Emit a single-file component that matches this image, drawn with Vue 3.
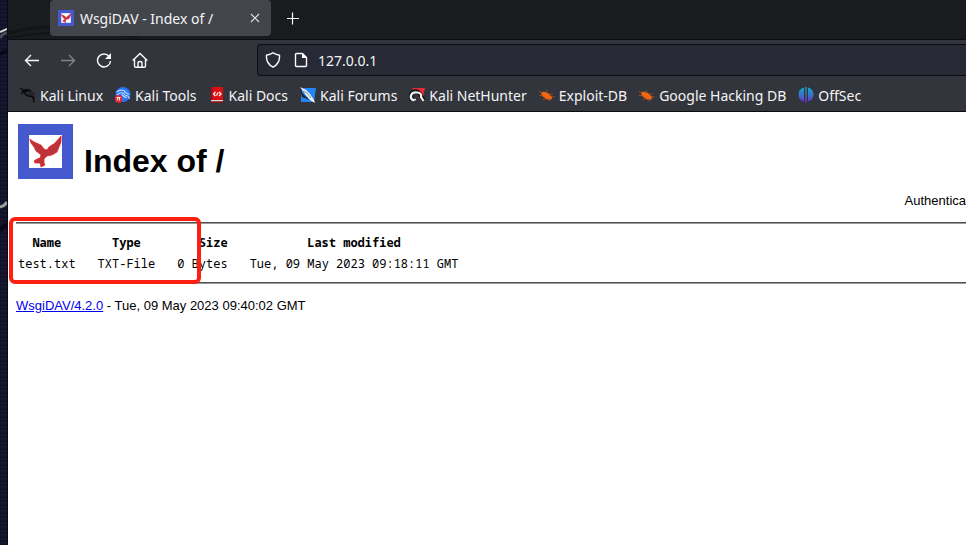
<script setup>
const bookmarks = [
  { name: 'Kali Linux', icon: 'dragon' },
  { name: 'Kali Tools', icon: 'tools' },
  { name: 'Kali Docs', icon: 'docs' },
  { name: 'Kali Forums', icon: 'forums' },
  { name: 'Kali NetHunter', icon: 'nethunter' },
  { name: 'Exploit-DB', icon: 'bug' },
  { name: 'Google Hacking DB', icon: 'bug' },
  { name: 'OffSec', icon: 'offsec' }
]
const files = [
  { name: 'test.txt', type: 'TXT-File', size: '0 Bytes', modified: 'Tue, 09 May 2023 09:18:11 GMT' }
]
const dove = 'M.7 4 L5 7 L12 10 L15 14 L18 15 L20 12 L26 8 L32 1 Q33 7 30 12 L28 17 L23 20 L18 21 L15 24 L15 28 L16 30 L12 32 L11 28 L6 28 L5 26 L8 24 L11 23 L12 20 L7 16 L5 12 L2 8Z'
</script>

<template>
  <div class="screen">
    <div class="desktop" aria-hidden="true">
      <svg width="7" height="240" viewBox="0 0 7 240">
        <path d="M0 32 L7 29" stroke="#d8d8d4" stroke-width="2" />
        <path d="M0 38 Q3 33 7 33" stroke="#454b50" stroke-width="3" fill="none" />
        <path d="M0 54 L7 51" stroke="#05051a" stroke-width="3" />
        <path d="M0 207 Q5 206 7 202" stroke="#93a297" stroke-width="3" fill="none" />
        <path d="M0 230 L7 224" stroke="#080816" stroke-width="4" />
      </svg>
    </div>
    <div class="browser">
      <header class="chrome">
        <div class="tabs">
          <svg class="arcs" width="150" height="14" viewBox="0 0 150 14" fill="none" aria-hidden="true">
            <path d="M0 8 Q25 1 55 2" stroke="#131417" stroke-width="3" />
            <path d="M0 13 Q65 1 130 13" stroke="#141519" stroke-width="2" />
          </svg>
          <div class="tab">
            <svg width="16" height="16" viewBox="0 0 55 55" aria-hidden="true">
              <path fill="#4559cf" d="M0 0h55v55H0z" /><path fill="#fff" d="M11 11h33v33H11z" />
              <path :d="dove" transform="translate(11 11)" fill="#c92c38" stroke="#c92c38" stroke-width="2" />
            </svg>
            <span class="tab-title">WsgiDAV - Index of /</span>
            <button class="icon-btn close" aria-label="Close tab">
              <svg width="16" height="16" viewBox="0 0 16 16"><path d="M4 4l8 8M12 4l-8 8" stroke="#e2e2e6" stroke-width="1.1" /></svg>
            </button>
          </div>
          <button class="icon-btn" aria-label="New tab">
            <svg width="16" height="16" viewBox="0 0 16 16"><path d="M2 8.5h12M7.500 2.500v12" stroke="#fbfbfe" stroke-width="1.2" /></svg>
          </button>
        </div>
        <div class="toolbar">
          <nav class="nav-buttons">
            <button class="icon-btn" aria-label="Back">
              <svg width="16" height="16" viewBox="0 0 16 16"><path d="M15 8.500H1.500M7 3L1.500 8.500L7 14" /></svg>
            </button>
            <button class="icon-btn faded" aria-label="Forward">
              <svg width="16" height="16" viewBox="0 0 16 16"><path d="M1 8.500h13.500M9 3l5.500 5.500L9 14" /></svg>
            </button>
            <button class="icon-btn" aria-label="Reload">
              <svg width="16" height="16" viewBox="0 0 16 16"><path d="M13.200 4.500A6.500 6.500 0 1 0 14.500 9" /><path d="M15 1v6H9z" fill="#fbfbfe" stroke="none" /></svg>
            </button>
            <button class="icon-btn" aria-label="Home">
              <svg width="16" height="16" viewBox="0 0 16 16"><path d="M.7 8.500L8 1.500l7.300 7M2.500 7v7q0 1.300 1.300 1.300h8.400q1.300 0 1.300-1.300V7M6 15v-4q0-1.500 2-1.500t2 1.500v4" /></svg>
            </button>
          </nav>
          <div class="address">
            <svg width="16" height="16" viewBox="0 0 16 16" aria-hidden="true"><path d="M8 .8Q10 2.500 14.500 3.200Q15.200 11.500 8 15.200Q.8 11.500 1.500 3.200Q6 2.500 8 .8Z" /></svg>
            <svg width="16" height="16" viewBox="0 0 16 16" aria-hidden="true"><path d="M9.500 1.500H3.500Q2.500 1.500 2.500 2.500v11q0 1 1 1h9q1 0 1-1V5.500L9.500 1.500" /><path d="M9 1l5 5H9z" fill="#fbfbfe" stroke="none" /></svg>
            <input class="url" type="text" value="127.0.0.1" aria-label="Address" />
          </div>
        </div>
        <nav class="bookmarks">
          <a v-for="b in bookmarks" :key="b.name" class="bookmark" href="#">
            <svg width="16" height="16" viewBox="0 0 16 16" fill="none" aria-hidden="true">
              <g v-if="b.icon === 'dragon'" stroke="#08090b" stroke-linecap="round" stroke-linejoin="round">
                <path d="M.5 1.500L4 3l4-.5L11 4M2 4.500L5 4M1.500 6.500L4 4.500L8 4" stroke-width="1.300" />
                <path d="M6 4Q4 6.500 6 8T11 9.200Q14 10.500 14 15" stroke-width="1.500" />
                <path d="M8 5q3-1.500 5 1l2 1.500M8 7q3-1 5 1M11 9q2-.5 4 1.500" stroke-width=".8" />
              </g>
              <g v-else-if="b.icon === 'tools'">
                <circle cx="8" cy="7.500" r="7.500" fill="#2774f4" />
                <path d="M1.500 5q5-3.500 9-.5M2 8q5-4.500 8 0 4 .5 4.500 4M9 4.500l5 3M7 7q1 3 5 3.500" stroke="#b9d6ff" stroke-width="1.100" />
                <circle cx="3.500" cy="12" r="3.900" fill="#e22936" /><path d="M1.500 10.500h4M2.700 10.500v3M4.500 10.500v3" stroke="#fff" stroke-width=".9" />
              </g>
              <g v-else-if="b.icon === 'docs'">
                <path d="M2 0h12v13H2z" fill="#d90f12" /><path d="M2 0h1.500v14H2z" fill="#a20c15" /><path d="M2 13h12v1.500H2z" fill="#dcd8da" /><path d="M2 14.500h12V16H2z" fill="#8c0c15" />
                <path d="M6.500 5L4.500 7l2 2M10 5l2 2-2 2M9 5.500L7.500 8.500" stroke="#fff" stroke-width="1.200" />
              </g>
              <g v-else-if="b.icon === 'forums'">
                <path d="M3 1h13L14 15H1V7z" fill="#2384f3" />
                <path d="M0 3l5 6 5 4-8-3z" fill="#20262e" />
                <path d="M0 0l6 3 4 4 4 6 1 3-5-3-5-6z" fill="#f4f7fa" />
                <path d="M3 4l4 2 4 5" stroke="#4b5661" stroke-width=".7" />
              </g>
              <g v-else-if="b.icon === 'nethunter'">
                <path d="M3 1h13l-3 14z" fill="#e52a35" />
                <path d="M3 13Q0 8 4 5.500T11 7.500L14.500 13.500" stroke="#111418" stroke-width="4.500" />
                <path d="M5 13.500Q1 12 2 8.500T8 5.500 12 10l2.500 4" stroke="#f3f3f3" stroke-width="2.200" />
                <path d="M4 13l3-.5" stroke="#f3f3f3" stroke-width="1.500" />
              </g>
              <g v-else-if="b.icon === 'bug'">
                <path d="M2 6L4.500 4.500L9 6l4 4-.5 2.500H8L3 9z" fill="#f26511" />
                <path d="M0 4.500l4 1.500M0 8.500l4 0M7 5.500l1-2.500M10 7l4 0M12 9.500l4 .5M7 11.500l-3 1.500M10 12l1 2.500" stroke="#b85724" stroke-width=".7" />
              </g>
              <g v-else>
                <defs><linearGradient id="offsec-fill" x2="0" y2="1"><stop stop-color="#17a8cc" /><stop offset=".55" stop-color="#3d6dc7" /><stop offset="1" stop-color="#7020d8" /></linearGradient></defs>
                <path d="M6 .5v14Q.5 13 .5 7.500T6 .5M10 .5v14q5.500-1.500 5.500-7T10 .5M7.300 0h1.400v16H7.300z" fill="url(#offsec-fill)" />
              </g>
            </svg>
            <span>{{ b.name }}</span>
          </a>
        </nav>
      </header>

      <main class="page">
        <h1>
          <svg width="55" height="55" viewBox="0 0 55 55" role="img" aria-label="WsgiDAV">
            <path fill="#4559cf" d="M0 0h55v55H0z" /><path fill="#fff" d="M11 11h33v33H11z" />
            <path :d="dove" transform="translate(11 11)" fill="#bc3439" stroke="#ee1d25" stroke-width=".7" />
          </svg>
          <span>Index of /</span>
        </h1>
        <p class="auth">Authentica</p>
        <hr />
        <table>
          <thead>
            <tr><th>Name</th><th>Type</th><th class="size">Size</th><th>Last modified</th></tr>
          </thead>
          <tbody>
            <tr v-for="f in files" :key="f.name">
              <td>{{ f.name }}</td><td>{{ f.type }}</td><td class="size">{{ f.size }}</td><td>{{ f.modified }}</td>
            </tr>
          </tbody>
        </table>
        <hr />
        <p class="footer"><a href="#">WsgiDAV/4.2.0</a> - Tue, 09 May 2023 09:40:02 GMT</p>
        <div class="highlight"></div>
      </main>
    </div>
  </div>
</template>

<style>
body { margin: 0; background: #fff; }
</style>

<style scoped>
* { box-sizing: border-box; }
.screen { display: flex; min-height: 100vh; overflow: hidden; }
.desktop { flex: 0 0 7px; background: repeating-linear-gradient(#111129 0 2px, #16162f 2px 4px); }
.desktop svg { display: block; }
.browser { flex: 1; min-width: 0; display: flex; flex-direction: column; border-left: 1px solid #08090c; }
.chrome { background: #33353c; color: #f4f4f6; font-family: "Noto Sans", sans-serif; font-size: 14px; border-bottom: 1px solid #0c0c0f; }
.tabs { position: relative; display: flex; align-items: flex-start; gap: 14px; height: 40px; padding-left: 42px; background: #1a1b1f; border-bottom: 1px solid #0c0d12; }
.arcs { position: absolute; left: 0; bottom: 0; }
.tab { position: relative; display: flex; align-items: center; gap: 6px; width: 221px; height: 36px; padding: 0 8px; border-radius: 4px; background: #43454c; }
.tab-title { flex: 1; white-space: nowrap; }
.icon-btn { display: flex; padding: 0; border: 0; background: none; }
.tabs > .icon-btn { margin-top: 10px; }
.toolbar { display: flex; align-items: center; height: 40px; padding-left: 16px; }
.nav-buttons { display: flex; gap: 20px; width: 233px; flex: none; }
.nav-buttons svg, .address svg { fill: none; stroke: #fbfbfe; stroke-width: 1.4; flex: none; }
.faded { opacity: .4; }
.address { flex: 1; display: flex; align-items: center; gap: 12px; height: 32px; padding-left: 7px; background: #272934; border: 1px solid #0c0d12; border-right: 0; border-radius: 4px 0 0 4px; }
.url { flex: 1; min-width: 0; padding: 0; margin-left: -3px; border: 0; outline: 0; background: none; color: inherit; font: inherit; }
.bookmarks { display: flex; align-items: center; gap: 12px; height: 31px; padding: 0 0 1px 12px; white-space: nowrap; }
.bookmark { display: flex; align-items: center; gap: 4px; color: inherit; text-decoration: none; }
.bookmark svg { flex: none; }
.page { flex: 1; position: relative; padding: 12px 0 0 8px; background: #fff; color: #000; font-family: "Liberation Sans", Arial, sans-serif; font-size: 13px; line-height: 16px; }
h1 { display: flex; align-items: flex-end; gap: 11px; margin: 0; padding-left: 2px; font-size: 32px; line-height: 36px; }
.auth { margin: 14px 0 13px; text-align: right; }
hr { height: 2px; margin: 0; border: 0; border-top: 1px solid #505050; border-bottom: 1px solid #9a9a9a; }
table { margin: 7px 0; border-spacing: 2px; font-family: "Noto Sans Mono", "DejaVu Sans Mono", monospace; font-size: 12px; line-height: 17px; }
th, td { padding: 1px 20px 1px 0; white-space: nowrap; }
.size { text-align: right; }
.footer { margin: 14px 0 0; }
.footer a { color: #00e; }
.highlight { position: absolute; left: 1px; top: 105px; width: 192px; height: 67px; border: 4px solid #fd1f12; border-radius: 6px; }
</style>
